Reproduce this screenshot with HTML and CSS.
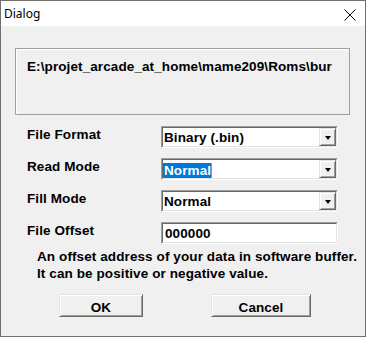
FILE: index.html
```html
<!DOCTYPE html>
<html>
<head>
<meta charset="utf-8">
<link rel="stylesheet" href="styles.css">
</head>
<body>
<div class="window">
  <div class="titlebar">
    <span class="title">Dialog</span>
    <svg class="close" width="12" height="12" viewBox="0 0 12 12"><path d="M0.5 0.5 L11.5 11.5 M11.5 0.5 L0.5 11.5" stroke="#000" stroke-width="1" fill="none"/></svg>
  </div>
  <div class="content">
    <div class="group">E:\projet_arcade_at_home\mame209\Roms\bur</div>
    <div class="form">
      <div class="label">File Format</div>
      <div class="combo"><span class="val">Binary (.bin)</span><span class="drop"><span class="tri"></span></span></div>
      <div class="label">Read Mode</div>
      <div class="combo"><span class="val"><span class="sel">Normal</span></span><span class="drop"><span class="tri"></span></span></div>
      <div class="label">Fill Mode</div>
      <div class="combo"><span class="val">Normal</span><span class="drop"><span class="tri"></span></span></div>
      <div class="label">File Offset</div>
      <div class="edit">000000</div>
    </div>
    <div class="desc">An offset address of your data in software buffer.<br>It can be positive or negative value.</div>
    <div class="buttons">
      <div class="btn ok">OK</div>
      <div class="btn cancel">Cancel</div>
    </div>
  </div>
</div>
</body>
</html>
```
FILE: styles.css
```css
html, body {
  margin: 0;
  padding: 0;
  background: #f0f0f0;
}
.window {
  width: 366px;
  height: 337px;
  box-sizing: border-box;
  border: 1px solid #6f6f6f;
  background: #f0f0f0;
  display: flex;
  flex-direction: column;
  font-family: "Liberation Sans", Arial, sans-serif;
  font-weight: bold;
  font-size: 13.5px;
  letter-spacing: 0.1px;
  color: #000;
}
.titlebar {
  height: 25px;
  background: #fff;
  display: flex;
  align-items: center;
  justify-content: space-between;
  padding: 0 9px 0 3px;
  flex: none;
}
.title {
  font-family: "Noto Sans", "Open Sans", sans-serif;
  font-weight: normal;
  font-size: 12px;
  letter-spacing: 0;
  line-height: 16px;
  padding-top: 1px;
}
.close {
  display: block;
  margin-top: 2px;
}
.content {
  flex: 1;
  display: flex;
  flex-direction: column;
}
.group {
  margin: 22px 0 0 14px;
  width: 335px;
  height: 67px;
  box-sizing: border-box;
  border: 1px solid #a0a0a0;
  box-shadow: inset 1px 1px 0 #fff;
  padding: 10px 0 0 11px;
  line-height: 15px;
  white-space: nowrap;
}
.form {
  margin: 11px 0 0 26px;
  display: grid;
  grid-template-columns: 134px 177px;
  grid-auto-rows: 22px;
  row-gap: 10px;
}
.label {
  line-height: 15px;
  padding-top: 1px;
  white-space: nowrap;
}
.combo, .edit {
  box-sizing: border-box;
  height: 22px;
  border-style: solid;
  border-width: 1px;
  border-color: #a0a0a0 #fff #fff #a0a0a0;
  background: #fff;
  position: relative;
}
.combo::before, .edit::before {
  content: "";
  position: absolute;
  inset: 0;
  border-style: solid;
  border-width: 1px;
  border-color: #696969 #e3e3e3 #e3e3e3 #696969;
  pointer-events: none;
}
.combo {
  display: flex;
  align-items: stretch;
  padding: 1px;
}
.val {
  flex: 1;
  line-height: 18px;
  padding: 1px 0 0 1px;
  white-space: nowrap;
}
.sel {
  background: #0078d7;
  color: #fff;
  display: inline-block;
  line-height: 15px;
  padding: 0 0 0 1px;
  margin-left: -1px;
  margin-top: 2px;
  border-right: 1px solid #d9862b;
  vertical-align: top;
}
.drop {
  width: 17px;
  box-sizing: border-box;
  border-style: solid;
  border-width: 1px;
  border-color: #e3e3e3 #696969 #696969 #e3e3e3;
  background: #f0f0f0;
  box-shadow: inset 1px 1px 0 #fff, inset -1px -1px 0 #a0a0a0;
  display: flex;
  align-items: center;
  justify-content: center;
  position: relative;
  z-index: 1;
}
.tri {
  width: 0;
  height: 0;
  border-left: 3.5px solid transparent;
  border-right: 3.5px solid transparent;
  border-top: 4px solid #000;
  margin-top: 1px;
}
.edit {
  padding: 2px 0 0 3px;
  line-height: 18px;
}
.desc {
  margin: 4px 0 0 36px;
  line-height: 17px;
  white-space: nowrap;
}
.buttons {
  margin: 12px 0 0 58px;
  display: flex;
  gap: 68px;
}
.btn {
  height: 23px;
  box-sizing: border-box;
  border-style: solid;
  border-width: 1px;
  border-color: #e3e3e3 #696969 #696969 #e3e3e3;
  box-shadow: inset 1px 1px 0 #fff, inset -1px -1px 0 #a0a0a0;
  background: #f0f0f0;
  text-align: center;
  line-height: 23px;
  padding-top: 1px;
}
.ok { width: 84px; }
.cancel { width: 100px; }
```
